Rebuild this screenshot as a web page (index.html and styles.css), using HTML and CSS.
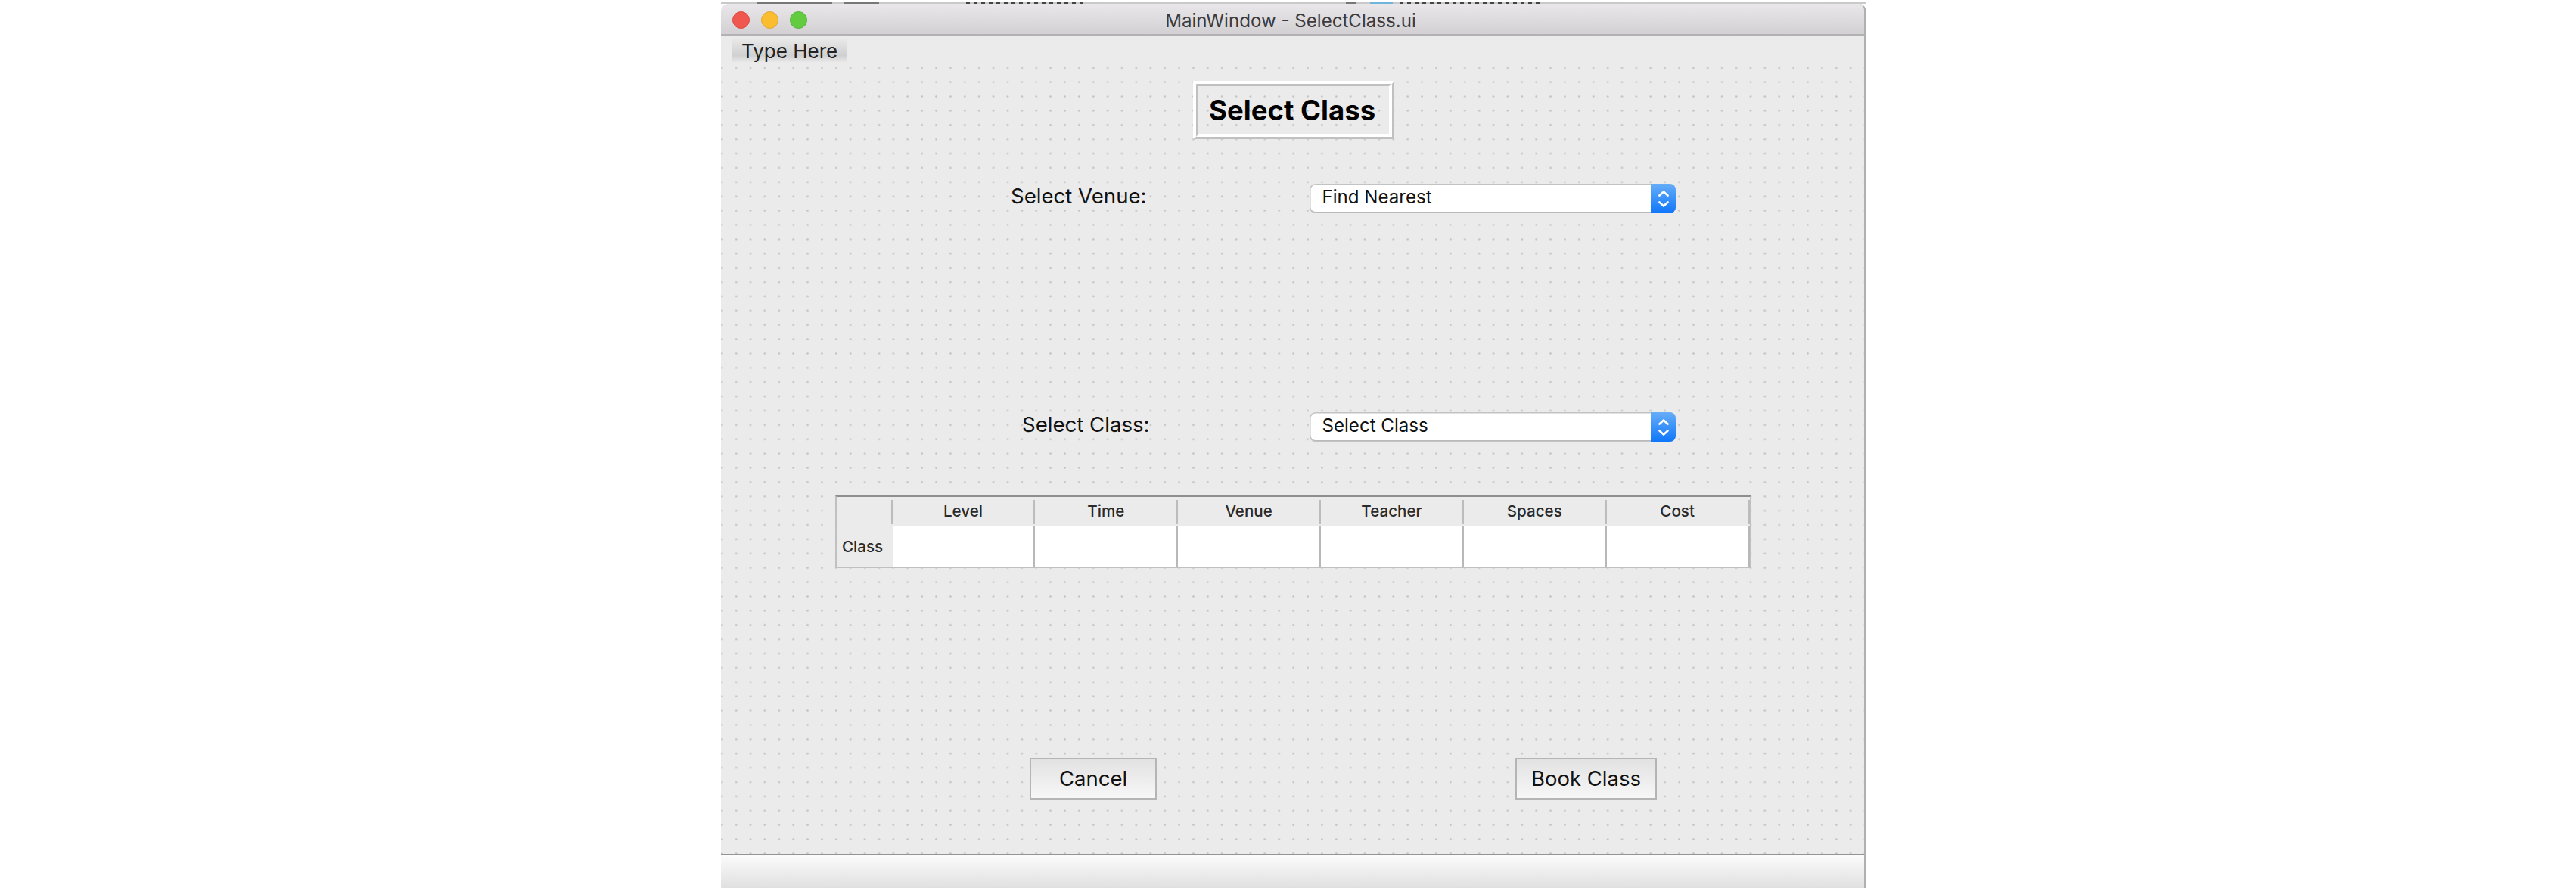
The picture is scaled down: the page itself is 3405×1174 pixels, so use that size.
FILE: index.html
```
<!DOCTYPE html>
<html lang="en">
<head>
<meta charset="utf-8">
<title>MainWindow - SelectClass.ui</title>
<link rel="stylesheet" href="styles.css">
</head>
<body>
<div class="behind">
  <i class="scrap a"></i><i class="scrap b"></i><i class="scrap text c"></i><i class="scrap d"></i><i class="scrap folder"></i><i class="scrap text e"></i>
</div>
<div class="window">
  <header class="titlebar">
    <div class="lights"><i class="light red"></i><i class="light yellow"></i><i class="light green"></i></div>
    <span class="window-title">MainWindow - SelectClass.ui</span>
  </header>
  <main class="canvas">
    <svg class="dots" width="1511" height="1082">
      <defs><pattern id="grid" x="-8.2" y="33.3" width="18.885" height="18.885" patternUnits="userSpaceOnUse"><circle cx="9.44" cy="9.44" r="1.35" fill="#c2c2c2"/></pattern></defs>
      <rect y="34" width="1511" height="1048" fill="url(#grid)"/>
    </svg>
    <nav class="menubar"><span class="menu">Type Here</span></nav>
    <h1 class="heading"><span>Select Class</span></h1>
    <div class="field venue">
      <label>Select Venue:</label>
      <div class="combo"><span>Find Nearest</span><b class="stepper"><svg width="16" height="24" viewBox="0 0 16 24"><path d="M2.5 7.5 8 2.5l5.5 5M2.5 16.5 8 21.5l5.5-5"/></svg></b></div>
    </div>
    <div class="field class">
      <label>Select Class:</label>
      <div class="combo"><span>Select Class</span><b class="stepper"><svg width="16" height="24" viewBox="0 0 16 24"><path d="M2.5 7.5 8 2.5l5.5 5M2.5 16.5 8 21.5l5.5-5"/></svg></b></div>
    </div>
    <div class="table">
      <div class="corner"></div>
      <div class="th">Level</div><div class="th">Time</div><div class="th">Venue</div><div class="th">Teacher</div><div class="th">Spaces</div><div class="th">Cost</div>
      <div class="row-label">Class</div>
      <div class="td"></div><div class="td"></div><div class="td"></div><div class="td"></div><div class="td"></div><div class="td"></div>
    </div>
    <div class="actions">
      <button class="btn cancel">Cancel</button>
      <button class="btn book">Book Class</button>
    </div>
  </main>
  <footer class="statusbar"></footer>
</div>
</body>
</html>
```
FILE: styles.css
```
* { box-sizing: border-box; }
body {
  margin: 0;
  height: 1174px;
  overflow: hidden;
  background: #fff;
  color: #111;
  font-family: Inter, "Liberation Sans", sans-serif;
}

/* Sliver of the window that sits underneath */
.behind {
  display: flex;
  width: 1514px;
  height: 5px;
  margin-left: 953px;
  padding-top: 3px;
  background: linear-gradient(#fff 3px, #c9c9c9 3px);
}
.scrap { height: 2px; background: #777; }
.a { width: 100px; margin-left: 47px; }
.b { width: 47px; margin-left: 15px; }
.text { background: repeating-linear-gradient(90deg, #444 0 5px, #c9c9c9 5px 10px); }
.c { width: 160px; margin-left: 115px; }
.d { width: 13px; margin-left: 342px; }
.folder { width: 30px; margin-left: 19px; background: #6fb6da; }
.e { width: 187px; margin-left: 9px; }

.window {
  display: flex;
  flex-direction: column;
  width: 1514px;
  height: 1169px;
  margin-left: 953px;
  border-right: 3px solid #b0b0b0;
  border-top-left-radius: 10px;
  border-top-right-radius: 10px;
  background: #ebebeb;
  overflow: hidden;
  isolation: isolate;
}
.titlebar {
  display: grid;
  grid-template-columns: 1fr auto 1fr;
  align-items: center;
  height: 42px;
  flex: none;
  padding-left: 15px;
  border-bottom: 2px solid #b3b1b3;
  background: linear-gradient(#e9e7e9, #d2d0d2);
}
.lights { display: flex; gap: 15px; padding-top: 1px; }
.light { width: 23px; height: 23px; border-radius: 50%; border: 1.5px solid; }
.red { background: #f0574f; border-color: #dc4a44; }
.yellow { background: #fabd30; border-color: #e3a52d; }
.green { background: #62cb40; border-color: #51b436; }
.window-title {
  margin: 0 5px 0 -15px;
  padding-top: 4px;
  font-size: 24.1px;
  line-height: 38px;
  color: #3c3a3c;
}

.canvas {
  position: relative;
  display: flex;
  flex-direction: column;
  flex: none;
  height: 1082px;
}
.dots { position: absolute; left: 0; top: 0; z-index: -1; }

.menubar { height: 36px; padding: 2px 0 0 15px; }
.menu {
  display: block;
  width: 151px;
  height: 34px;
  padding-left: 12px;
  font-size: 26px;
  line-height: 37px;
  color: #222;
  background: linear-gradient(#ebebeb, #d0d0d0 72%, #ebebeb);
}

.heading {
  align-self: flex-start;
  width: 266px;
  height: 77px;
  margin: 24px 0 0 624px;
  border: 4px solid #fff;
  border-right: 3px solid #c0c0c0;
  border-bottom: 3px solid #c0c0c0;
  font-size: 36.6px;
  font-weight: 700;
  color: #000;
}
.heading span {
  display: block;
  height: 70px;
  padding-left: 14px;
  border: 4px solid #fff;
  border-left: 3px solid #c0c0c0;
  border-top: 3px solid #c0c0c0;
  line-height: 64px;
  white-space: nowrap;
}

.field { display: flex; height: 39px; }
.venue { margin-top: 59px; padding-left: 383px; }
.class { margin-top: 263px; padding-left: 398px; }
.field label {
  width: 395px;
  font-size: 27.6px;
  line-height: 33px;
}
.class label { width: 380px; }
.combo {
  display: flex;
  justify-content: space-between;
  width: 484px;
  height: 39px;
  border-radius: 8px;
  background: #fff;
  box-shadow: inset 0 0 0 1.5px #c3c3c3, inset 0 -2px 0 #b0b0b0;
}
.combo span {
  padding-left: 16.5px;
  font-size: 24.1px;
  line-height: 36px;
}
.stepper {
  display: flex;
  align-items: center;
  justify-content: center;
  width: 33px;
  height: 39px;
  border-radius: 0 8px 8px 0;
  background: linear-gradient(#66adf8, #0f76fb);
}
.stepper path {
  fill: none;
  stroke: #fff;
  stroke-width: 2.7;
  stroke-linecap: round;
  stroke-linejoin: round;
}

.table {
  display: grid;
  grid-template-columns: 73.5px repeat(6, 188.85px);
  grid-template-rows: 39px 53px;
  width: 1211px;
  height: 96px;
  margin: 71px 0 0 151px;
  border: 2px solid #c0c0c0;
  border-top-color: #8e8e8e;
  background: #ebebeb;
  font-size: 20.6px;
  font-weight: 500;
  color: #2b2b2b;
}
.corner, .th { height: 32px; margin-top: 4px; border-right: 2px solid #bcbcbc; }
.th { text-align: center; line-height: 30px; }
.row-label { padding-left: 7px; line-height: 54px; }
.td { background: #fff; border-right: 2px solid #b8b8b8; }

.actions {
  display: flex;
  margin: 251px 0 0 408px;
  gap: 474px;
}
.btn {
  height: 55px;
  padding: 0;
  border: 2px solid #b5b5b5;
  background: linear-gradient(#e2e2e2, #f7f7f7);
  font: 27.5px/51px Inter, "Liberation Sans", sans-serif;
  color: #111;
}
.cancel { width: 168px; }
.book { width: 187px; }

.statusbar {
  flex: 1;
  border-top: 2px solid #949494;
  background: linear-gradient(#fbfbfb, #e0e0e0);
}
```
